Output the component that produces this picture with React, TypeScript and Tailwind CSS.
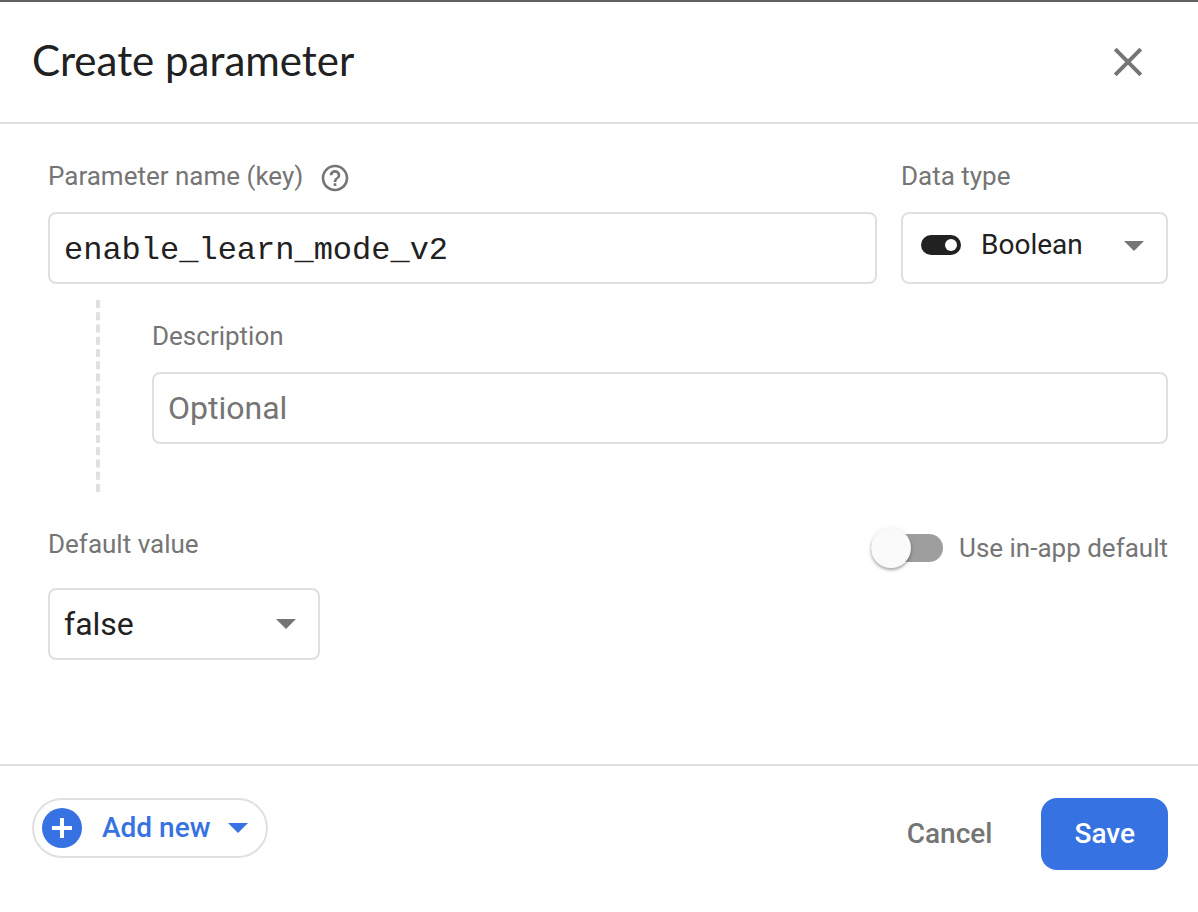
import { useState } from "react";
import type { ReactNode } from "react";

const boxClass =
  "h-[72px] w-full rounded-lg border-2 border-[#e0e0e0] bg-white text-[#212121] outline-none focus:border-[#3672e1]";

function Caret({ className }: { className: string }) {
  return (
    <svg viewBox="0 0 20 10" className={"h-[10px] w-5 " + className} fill="currentColor" aria-hidden="true">
      <path d="M0 0h20L10 10z" />
    </svg>
  );
}

function Label({ htmlFor, children }: { htmlFor: string; children: ReactNode }) {
  return (
    <label htmlFor={htmlFor} className="text-[26px] leading-8 whitespace-nowrap text-[#757575]">
      {children}
    </label>
  );
}

export default function App() {
  const [name, setName] = useState("enable_learn_mode_v2");
  const [description, setDescription] = useState("");
  const [dataType, setDataType] = useState("Boolean");
  const [value, setValue] = useState("false");
  const [inApp, setInApp] = useState(false);

  return (
    <div className="flex min-h-screen flex-col border-t-2 border-[#616161] bg-white font-['Roboto',sans-serif] text-[#212121]">
      <header className="flex h-[122px] items-center justify-between border-b-2 border-[#e0e0e0] pr-[46px] pl-8">
        <h1 className="pb-1 font-['Lato','Open_Sans',sans-serif] text-[42px] leading-[52px]">Create parameter</h1>
        <button type="button" aria-label="Close" className="text-[#757575]">
          <svg viewBox="0 0 48 48" className="size-12" fill="none" stroke="currentColor" strokeWidth="4" aria-hidden="true">
            <path d="M11.2 11.2 36.8 36.8M36.8 11.2 11.2 36.8" />
          </svg>
        </button>
      </header>

      <main className="flex-1 pt-9 pr-[30px] pb-8 pl-12">
        <div className="flex gap-6">
          <div className="min-w-0 flex-1">
            <div className="flex h-[52px] items-start">
              <Label htmlFor="name">Parameter name (key)</Label>
              <button type="button" aria-label="About parameter names" className="mt-[2px] ml-4 text-[#757575]">
                <svg viewBox="0 0 24 24" className="size-8" fill="currentColor" aria-hidden="true">
                  <path d="M11 18h2v-2h-2v2zm1-16C6.48 2 2 6.48 2 12s4.48 10 10 10 10-4.48 10-10S17.52 2 12 2zm0 18c-4.41 0-8-3.59-8-8s3.59-8 8-8 8 3.59 8 8-3.59 8-8 8zm0-14c-2.21 0-4 1.79-4 4h2c0-1.1.9-2 2-2s2 .9 2 2c0 2-3 1.75-3 5h2c0-2.25 3-2.5 3-5 0-2.21-1.79-4-4-4z" />
                </svg>
              </button>
            </div>
            <input
              id="name"
              type="text"
              value={name}
              onChange={(e) => setName(e.target.value)}
              className={boxClass + " px-[14px] pt-1 font-['Liberation_Mono',monospace] text-[32px]"}
            />
          </div>
          <div className="w-[267px]">
            <div className="h-[52px]">
              <Label htmlFor="type">Data type</Label>
            </div>
            <div className="relative">
              <select
                id="type"
                value={dataType}
                onChange={(e) => setDataType(e.target.value)}
                className={boxClass + " appearance-none pr-12 pb-[6px] pl-[78px] text-[28px]"}
              >
                <option>Boolean</option>
                <option>String</option>
                <option>Number</option>
                <option>JSON</option>
              </select>
              <svg viewBox="0 0 40 20" className="pointer-events-none absolute top-[23px] left-5 h-5 w-10" aria-hidden="true">
                <rect width="40" height="20" rx="10" fill="#212121" />
                <circle cx="30" cy="10" r="6" fill="#fff" />
              </svg>
              <Caret className="pointer-events-none absolute top-[29px] right-6 text-[#757575]" />
            </div>
          </div>
        </div>

        <div className="mt-4 ml-12 h-48 border-l-4 border-dashed border-[#e0e0e0] pt-5 pl-[52px]">
          <div className="h-[52px]">
            <Label htmlFor="description">Description</Label>
          </div>
          <input
            id="description"
            type="text"
            placeholder="Optional"
            value={description}
            onChange={(e) => setDescription(e.target.value)}
            className={boxClass + " px-[14px] text-[32px] placeholder:text-[#757575]"}
          />
        </div>

        <div className="mt-9 flex h-[60px] items-start justify-between">
          <Label htmlFor="value">Default value</Label>
          <div className="flex h-10 items-center gap-4">
            <input
              id="in-app"
              type="checkbox"
              role="switch"
              checked={inApp}
              onChange={(e) => setInApp(e.target.checked)}
              className="flex h-7 w-[72px] appearance-none items-center rounded-full bg-[#9e9e9e] before:size-10 before:shrink-0 before:rounded-full before:bg-[#fafafa] before:shadow-[0_2px_3px_rgba(0,0,0,0.3),0_1px_6px_rgba(0,0,0,0.08)] checked:justify-end checked:bg-[#3672e1]"
            />
            <Label htmlFor="in-app">Use in-app default</Label>
          </div>
        </div>
        <div className="relative w-[272px]">
          <select
            id="value"
            value={value}
            onChange={(e) => setValue(e.target.value)}
            className={boxClass + " appearance-none pr-12 pl-[14px] text-[32px]"}
          >
            <option>false</option>
            <option>true</option>
          </select>
          <Caret className="pointer-events-none absolute top-[31px] right-6 text-[#757575]" />
        </div>
      </main>

      <footer className="flex items-start justify-between border-t-2 border-[#e0e0e0] pt-8 pr-[30px] pb-[42px] pl-8 text-[28px] font-medium">
        <button
          type="button"
          className="flex h-[60px] items-center rounded-full border-2 border-[#e0e0e0] pr-[18px] pl-2 text-[#3672e1]"
        >
          <svg viewBox="0 0 40 40" className="mr-5 size-10" aria-hidden="true">
            <circle cx="20" cy="20" r="20" fill="#3672e1" />
            <path d="M20 10v20M10 20h20" stroke="#fff" strokeWidth="4" />
          </svg>
          <span>Add new</span>
          <Caret className="ml-[18px]" />
        </button>
        <div className="flex items-center gap-4">
          <button type="button" className="h-[72px] px-[33px] text-[#757575]">
            Cancel
          </button>
          <button type="button" className="h-[72px] rounded-2xl bg-[#3672e1] px-[33px] text-white">
            Save
          </button>
        </div>
      </footer>
    </div>
  );
}
